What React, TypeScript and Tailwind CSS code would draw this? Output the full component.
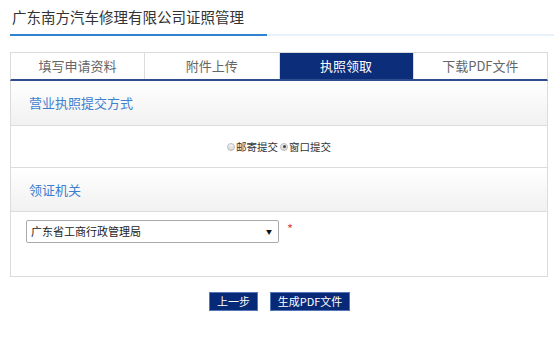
import { useState } from 'react';

const font = { fontFamily: '"Noto Sans CJK SC", "Noto Sans", sans-serif' };

export default function App() {
  const [active, setActive] = useState(2);
  const [way, setWay] = useState<'mail' | 'window'>('window');
  const tabs = ['填写申请资料', '附件上传', '执照领取', '下载PDF文件'];

  return (
    <div className="w-[554px] h-[348px] bg-white overflow-hidden" style={font}>
      <div className="pl-[12px] pt-[6px] h-[34px] text-[14.5px] leading-[22px] text-[#333]">
        广东南方汽车修理有限公司证照管理
      </div>
      <div className="flex ml-[10px] h-[2px]">
        <div className="w-[257px] bg-[#2f82d2]" />
        <div className="flex-1 bg-[#e9f1fa]" />
      </div>

      {/* Tabs */}
      <div className="mt-[16px] ml-[10px] w-[538px] flex h-[29px] border-t border-l border-r border-[#dcdcdc] border-b-2 border-b-[#2d4d8f]">
        {tabs.map((t, i) => (
          <button
            key={t}
            onClick={() => setActive(i)}
            className={`flex-1 flex items-center justify-center text-[13px] ${i > 0 ? 'border-l border-[#dcdcdc]' : ''} ${active === i ? 'bg-[#0b2d7a] text-white' : 'bg-white text-[#666]'}`}
          >
            {t}
          </button>
        ))}
      </div>

      {/* Section box */}
      <div className="ml-[10px] w-[538px] border-l border-r border-b border-[#dcdcdc]">
        <div className="h-[45px] flex items-center pl-[18px] text-[13px] text-[#3f7fcf] bg-gradient-to-b from-white to-[#f1f1f1] border-b border-[#dcdcdc]">
          营业执照提交方式
        </div>
        <div className="h-[42px] flex items-center justify-center text-[10.5px] text-[#333] border-b border-[#dcdcdc]">
          <label className="flex items-center cursor-pointer" onClick={() => setWay('mail')}>
            <span className="w-[8px] h-[8px] rounded-full border border-[#bbb] bg-gradient-to-b from-[#f4f4f4] to-[#d8d8d8] flex items-center justify-center">
              {way === 'mail' && <span className="w-[3px] h-[3px] rounded-full bg-[#333]" />}
            </span>
            <span className="ml-[1px]">邮寄提交</span>
          </label>
          <label className="flex items-center cursor-pointer ml-[2px]" onClick={() => setWay('window')}>
            <span className="w-[8px] h-[8px] rounded-full border border-[#bbb] bg-gradient-to-b from-[#f4f4f4] to-[#d8d8d8] flex items-center justify-center">
              {way === 'window' && <span className="w-[3px] h-[3px] rounded-full bg-[#444]" />}
            </span>
            <span className="ml-[1px]">窗口提交</span>
          </label>
        </div>
        <div className="h-[44px] flex items-center pl-[18px] text-[13px] text-[#3f7fcf] bg-gradient-to-b from-white to-[#f1f1f1] border-b border-[#dcdcdc]">
          领证机关
        </div>
        <div className="h-[64px] pt-[8px] pl-[15px] flex items-start">
          <div className="w-[253px] h-[23px] border border-[#aaa] rounded-[2px] bg-white flex items-center justify-between pl-[4px] pr-[6px] text-[11px] text-[#222]">
            <span>广东省工商行政管理局</span>
            <span className="text-[6px] leading-none text-[#111]">▼</span>
          </div>
          <span className="ml-[8px] mt-[1px] text-[13px] leading-[16px] text-[#e5484d]">*</span>
        </div>
      </div>

      {/* Buttons */}
      <div className="mt-[15px] flex justify-center gap-[12px] pl-[5px]">
        <button className="w-[49px] h-[19px] bg-[#062a78] border border-[#5577b5] text-white text-[11px] flex items-center justify-center">
          上一步
        </button>
        <button className="w-[80px] h-[19px] bg-[#062a78] border border-[#5577b5] text-white text-[11px] flex items-center justify-center">
          生成PDF文件
        </button>
      </div>
    </div>
  );
}
